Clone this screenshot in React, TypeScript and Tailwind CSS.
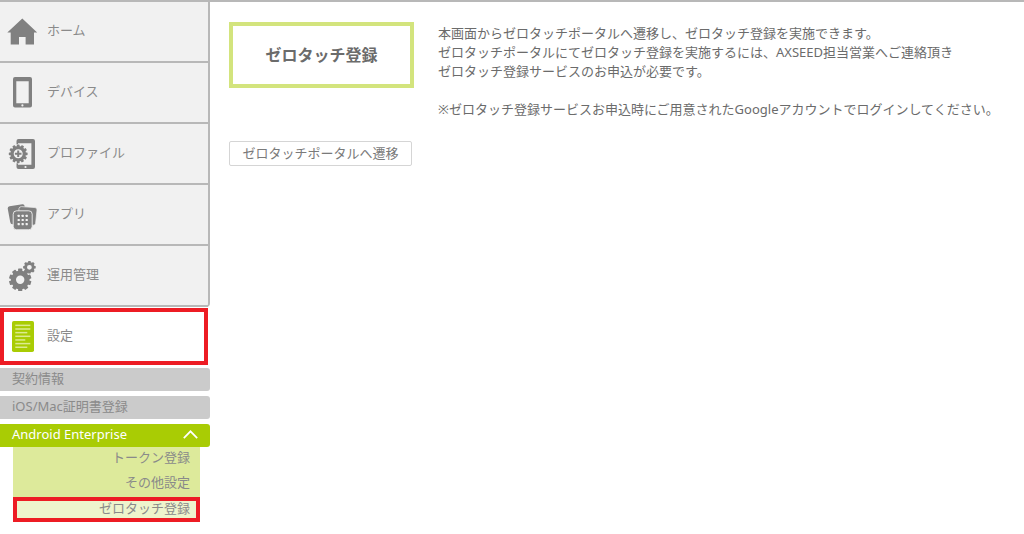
import React from "react";

type GearProps = {
  cx: number;
  cy: number;
  outer: number;
  body: number;
  hole: number;
  teeth: number;
  tooth: number;
};

function Gear({ cx, cy, outer, body, hole, teeth, tooth }: GearProps) {
  const ring = (body + hole) / 2;
  return (
    <g>
      {Array.from({ length: teeth }, (_, i) => (
        <rect
          key={i}
          x={cx - tooth / 2}
          y={cy - outer}
          width={tooth}
          height={outer - body + 1.5}
          rx={0.6}
          fill="#808080"
          transform={`rotate(${(360 / teeth) * i} ${cx} ${cy})`}
        />
      ))}
      <circle cx={cx} cy={cy} r={ring} fill="none" stroke="#808080" strokeWidth={body - hole} />
    </g>
  );
}

function MenuIcon({ children }: { children: React.ReactNode }) {
  return (
    <svg viewBox="0 0 40 59" className="h-[59px] w-10 shrink-0" fill="#808080" aria-hidden="true">
      {children}
    </svg>
  );
}

const homeIcon = (
  <MenuIcon>
    <path d="M22.3 16.5 7.3 30.6H10.7V42.5H19V35H25.6V42.5H34V30.6H37.2Z" />
  </MenuIcon>
);

const deviceIcon = (
  <MenuIcon>
    <path
      fillRule="evenodd"
      d="M15 14H30Q32 14 32 16V42.5Q32 44.5 30 44.5H15Q13 44.5 13 42.5V16Q13 14 15 14ZM16.3 18.2V40.3H28.7V18.2Z"
    />
    <circle cx="22.4" cy="42.4" r="1.1" fill="#f1f1f1" />
  </MenuIcon>
);

const profileIcon = (
  <MenuIcon>
    <path
      fillRule="evenodd"
      d="M18.5 15H33Q35 15 35 17V43Q35 45 33 45H18.5Q16.5 45 16.5 43V17Q16.5 15 18.5 15ZM18 19.2V40.8H31.4V19.2Z"
    />
    <circle cx="25.5" cy="43" r="1.1" fill="#f1f1f1" />
    <circle cx="18.2" cy="29.8" r="9.8" fill="#f1f1f1" />
    <Gear cx={18.2} cy={29.8} outer={9.4} body={7.8} hole={4.5} teeth={12} tooth={2.8} />
    <path d="M17.2 26.5H19.2V28.8H21.5V30.8H19.2V33.1H17.2V30.8H14.9V28.8H17.2Z" />
  </MenuIcon>
);

const appIcon = (
  <MenuIcon>
    <path d="M9.5 21.2 22.4 19.2Q24.4 19 24.6 21L25 24 14 39.2H12.4Q10.6 39.2 10.2 37L7.7 23.5Q7.6 21.6 9.5 21.2Z" />
    <path
      d="M21.5 21.6 35 22.6Q37.2 22.9 37 24.9L35.6 38.5Q35.1 40.4 33.3 40.2L18 38.5 19 23.4Q19.5 21.5 21.5 21.6Z"
      stroke="#f1f1f1"
      strokeWidth="0.7"
    />
    <rect x="13.2" y="25.8" width="19" height="19" rx="3.4" stroke="#f1f1f1" strokeWidth="0.9" />
    <g fill="#f1f1f1">
      {[29.8, 33.9, 38].map((y) =>
        [17.6, 21.6, 25.6].map((x) => <rect key={`${x}-${y}`} x={x} y={y} width="2.2" height="2.2" rx="0.4" />),
      )}
    </g>
  </MenuIcon>
);

const operationIcon = (
  <MenuIcon>
    <Gear cx={20.2} cy={33.8} outer={11.2} body={9.4} hole={4.2} teeth={10} tooth={4.2} />
    <Gear cx={29.4} cy={21.3} outer={6.3} body={5.2} hole={2.4} teeth={8} tooth={2.6} />
  </MenuIcon>
);

const items = [
  { label: "ホーム", icon: homeIcon },
  { label: "デバイス", icon: deviceIcon },
  { label: "プロファイル", icon: profileIcon },
  { label: "アプリ", icon: appIcon },
  { label: "運用管理", icon: operationIcon },
];

const lines = [15, 15, 12, 15, 10, 15, 12];

function Sidebar() {
  return (
    <nav className="w-[210px] shrink-0 text-[#8a8a8a]">
      <ul className="rounded-br-sm border-r-2 border-[#b8b8b8] bg-[#f1f1f1]">
        {items.map((item) => (
          <li key={item.label} className="border-b-2 border-[#b8b8b8]">
            <a href="#" className="flex items-center gap-[7px]">
              {item.icon}
              <span className="pb-0.5">{item.label}</span>
            </a>
          </li>
        ))}
      </ul>
      <a
        href="#"
        aria-current="page"
        className="mt-px mr-0.5 flex h-[57px] items-center gap-[13px] border-4 border-[#ed1c24] pl-2"
      >
        <svg viewBox="0 0 22 31" className="h-[31px] w-[22px] shrink-0" aria-hidden="true">
          <rect width="22" height="31" rx="1.8" fill="#a9cc04" />
          {lines.map((width, i) => (
            <rect key={i} x="3.3" y={3.6 + i * 3.65} width={width} height="1.5" fill="#dceb90" />
          ))}
        </svg>
        <span className="pb-0.5">設定</span>
      </a>
      <div className="mt-[3px] flex flex-col gap-[5px] leading-[21px]">
        <a href="#" className="rounded-r-[3px] bg-[#cbcbcb] pb-0.5 pl-3">
          契約情報
        </a>
        <a href="#" className="rounded-r-[3px] bg-[#cbcbcb] pb-0.5 pl-3">
          iOS/Mac証明書登録
        </a>
        <button
          type="button"
          aria-expanded="true"
          className="flex items-center justify-between rounded-r-[3px] bg-[#a9cc04] pr-3 pb-0.5 pl-3 text-white"
        >
          Android Enterprise
          <svg viewBox="0 0 15 9" className="h-[9px] w-[15px]" fill="none" stroke="#fff" strokeWidth="1.7" aria-hidden="true">
            <path d="M.8 8.2 7.5 1.3 14.2 8.2" />
          </svg>
        </button>
      </div>
      <ul className="mr-2.5 ml-[13px] bg-[#ddea9b] text-right leading-[21px]">
        <li>
          <a href="#" className="block pr-2.5 pb-1">
            トークン登録
          </a>
        </li>
        <li>
          <a href="#" className="block pr-2.5 pb-1">
            その他設定
          </a>
        </li>
        <li>
          <a
            href="#"
            aria-current="page"
            className="block border-4 border-[#ed1c24] bg-[#eef4cd] pr-1.5 pb-0.5 leading-[15px]"
          >
            ゼロタッチ登録
          </a>
        </li>
      </ul>
    </nav>
  );
}

export default function App() {
  return (
    <div className="flex min-h-screen border-t-2 border-[#b8b8b8] bg-white font-['Noto_Sans','Noto_Sans_CJK_JP',sans-serif] text-[13px] text-[#6b6b6b]">
      <Sidebar />
      <main className="flex min-w-0 flex-1 items-start gap-6 pt-5 pl-[19px]">
        <div className="w-[185px] shrink-0">
          <h1 className="flex h-[66px] items-center justify-center border-4 border-[#d3e47d] text-[16px] font-bold">
            ゼロタッチ登録
          </h1>
          <button
            type="button"
            className="mt-[53px] h-[25px] w-[183px] rounded-xs border border-[#d5d5d5] leading-[21px] text-[#7a7a7a]"
          >
            ゼロタッチポータルへ遷移
          </button>
        </div>
        <div className="min-w-0 pt-0.5 leading-[19px]">
          <p>
            本画面からゼロタッチポータルへ遷移し、ゼロタッチ登録を実施できます。
            <br />
            ゼロタッチポータルにてゼロタッチ登録を実施するには、AXSEED担当営業へご連絡頂き
            <br />
            ゼロタッチ登録サービスのお申込が必要です。
          </p>
          <p className="mt-[19px]">※ゼロタッチ登録サービスお申込時にご用意されたGoogleアカウントでログインしてください。</p>
        </div>
      </main>
    </div>
  );
}
